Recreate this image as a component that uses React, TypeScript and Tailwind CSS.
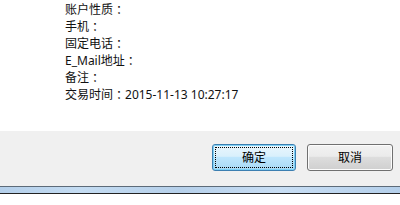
import React from 'react';

const rows: [string, string][] = [
  ['账户性质', ''],
  ['手机', ''],
  ['固定电话', ''],
  ['E_Mail地址', ''],
  ['备注', ''],
  ['交易时间', '2015-11-13 10:27:17'],
];

export default function App() {
  return (
    <div
      className="w-[400px] h-[205px] bg-white flex flex-col overflow-hidden"
      style={{ fontFamily: '"Noto Sans", "Noto Sans CJK SC", sans-serif' }}
    >
      <div className="h-[131px] bg-white pl-[65px] pt-px">
        {rows.map(([label, value]) => (
          <div key={label} className="flex items-center h-[17px] text-[12px] leading-[17px] text-[#111] whitespace-nowrap">
            <span>{label}</span>
            <span className="leading-[17px]" style={{ fontFamily: '"Noto Sans CJK TC", sans-serif' }}>：</span>
            <span>{value}</span>
          </div>
        ))}
      </div>

      <div className="h-[55px] bg-[#f0f0f0] flex items-start justify-end gap-[11px] pt-[13px] pr-[7px]">
        <button className="relative w-[84px] h-[27px] rounded-[3px] border border-[#3c7fb1] shadow-[0_0_0_1px_#7ed0f5_inset] bg-[linear-gradient(to_bottom,#eaf6fd_0%,#d9f0fc_45%,#bee6fd_50%,#a7d9f5_100%)] text-[12px] text-black flex items-center justify-center">
          <span className="absolute inset-[2px] border border-dotted border-[#000]" />
          确定
        </button>
        <button className="w-[86px] h-[27px] rounded-[3px] border border-[#707070] bg-[linear-gradient(to_bottom,#f2f2f2_0%,#ebebeb_45%,#dddddd_50%,#cfcfcf_100%)] shadow-[0_0_0_1px_#fcfcfc_inset] text-[12px] text-black flex items-center justify-center">
          取消
        </button>
      </div>

      <div className="h-px bg-[#5d6b79]" />
      <div className="h-[6px] bg-[linear-gradient(to_right,#b4cfea_0%,#c4dcf2_20%,#b6d0ea_45%,#c8def4_70%,#b4cfea_100%)]" />
      <div className="h-px bg-[#222]" />
      <div className="flex-1 bg-white" />
    </div>
  );
}
